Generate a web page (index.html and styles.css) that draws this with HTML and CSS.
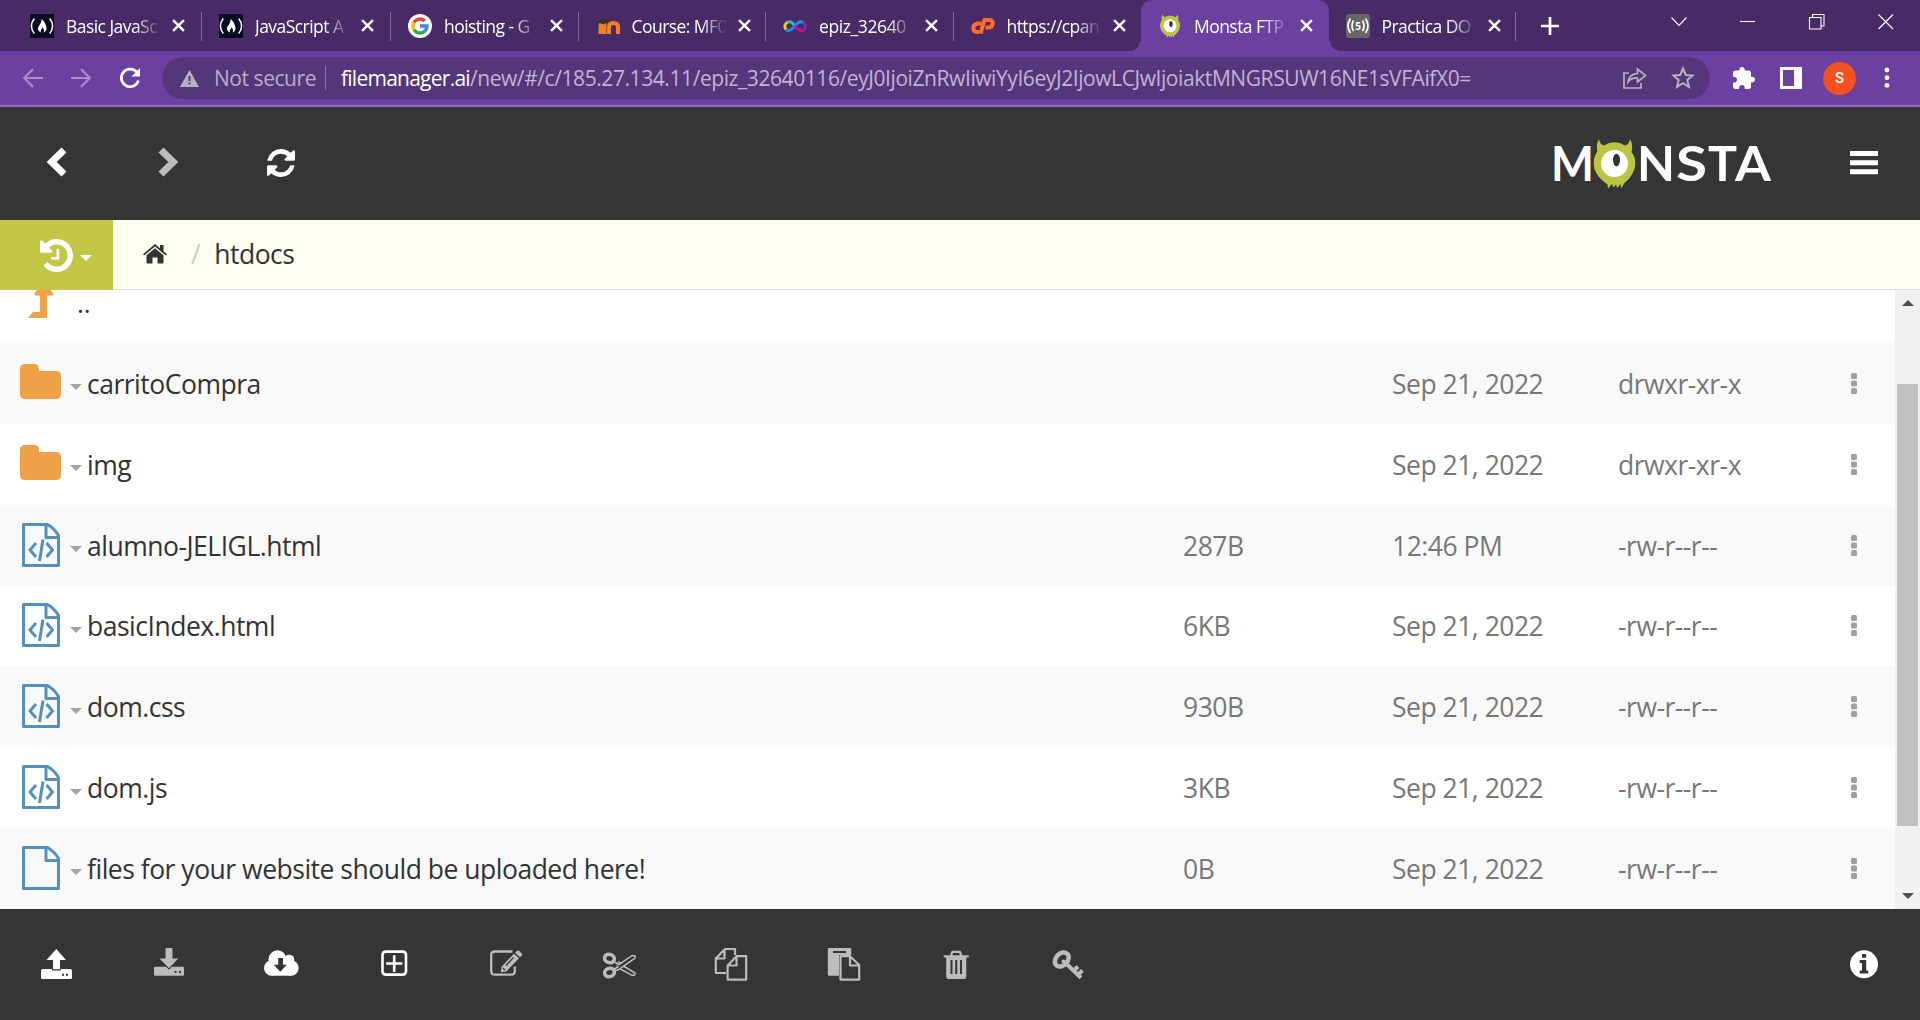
FILE: index.html
```html
<!DOCTYPE html>
<html lang="en">
<head>
<meta charset="utf-8">
<title>Monsta FTP</title>
<link rel="stylesheet" href="styles.css">
</head>
<body>
<svg class="defs" aria-hidden="true">
  <symbol id="x" viewBox="0 0 12 12"><path d="M1 1 11 11M11 1 1 11" stroke="#fff" stroke-width="2.2" fill="none"/></symbol>
  <symbol id="fcc" viewBox="0 0 24 24"><path fill="#0a0a23" d="M0 0h24v24H0z"/><path d="M4.300 4.500Q-1.500 12 4.300 19.500M19.700 4.500Q25.500 12 19.700 19.500" stroke="#fff" stroke-width="1.500" fill="none"/><path d="M11.500 5c3 2 5 6.500 5 9.500 0 2-1.200 3.500-3 4 1-1.500.8-3.500-1-5-.3 1.500-1.500 2-1.800 3.200-.1.800.2 1.400.7 1.900-2.200-.4-3.400-2-3.400-4 0-2.800 3.900-5 3.500-9.600z" fill="#fff"/></symbol>
  <symbol id="monster" viewBox="0 0 42 50"><path fill="#bcc443" d="M5.500 0C6 4 8 6 10.500 6.500Q21 0 31.500 6.500C34 6 36 4 36.500 0Q40 6 38 13Q42 18 42 25Q41 36 31 44L27.500 49.500 27 45 23.500 49 22.500 45.500 20 48.500 18.500 45 14.500 49.500 14 45.500Q1 37 0 25Q0 18 4 12Q2 6 5.500 0z"/><circle cx="21" cy="24.500" r="13.500" fill="#fff"/><ellipse cx="23" cy="21" rx="3.500" ry="6.300" fill="#333"/></symbol>
  <symbol id="folder" viewBox="0 0 41 35"><path fill="#efa148" d="M5 0h9q5 0 5 5v2h17q5 0 5 5v18q0 5-5 5H5q-5 0-5-5V5q0-5 5-5z"/></symbol>
  <symbol id="file" viewBox="0 0 38 44"><path d="M1.500 1.500H25.500Q32 5 36.500 12.500V42.500H1.500zM24 1.500V14.500H36.500" fill="none" stroke="#5390c0" stroke-width="3" stroke-linejoin="round"/></symbol>
  <symbol id="code" viewBox="0 0 38 44"><use href="#file"/><path d="M14 20 8 27 14 34M24.500 20 30.500 27 24.500 34M21 16.500 17.500 38" fill="none" stroke="#5390c0" stroke-width="3"/></symbol>
  <symbol id="caret" viewBox="0 0 12 6"><path d="M0 0H12L6 6z" fill="#a4a4a4"/></symbol>
  <symbol id="dots" viewBox="0 0 6 22"><g fill="#a0a0a0"><rect width="6" height="6" rx="1.500"/><rect y="7.600" width="6" height="6" rx="1.500"/><rect y="15" width="6" height="6" rx="1.500"/></g></symbol>
</svg>

<header class="tabs">
  <div class="tab wide"><svg class="fav"><use href="#fcc"/></svg><span>Basic JavaSc</span><svg class="close"><use href="#x"/></svg></div>
  <div class="tab wide"><svg class="fav"><use href="#fcc"/></svg><span>JavaScript A</span><svg class="close"><use href="#x"/></svg></div>
  <div class="tab"><svg class="fav" viewBox="0 0 24 24"><circle cx="12" cy="12" r="12" fill="#fff"/><g fill="none" stroke-width="3.400"><path d="M6 8.400A7 7 0 0 1 16.800 6.900" stroke="#ea4335"/><path d="M6 15.600A7 7 0 0 1 6 8.400" stroke="#fbbc05"/><path d="M16.700 17.200A7 7 0 0 1 6 15.600" stroke="#34a853"/><path d="M12 12H19A7 7 0 0 1 16.500 17.400" stroke="#4285f4"/></g></svg><span>hoisting - G</span><svg class="close"><use href="#x"/></svg></div>
  <div class="tab"><svg class="fav" viewBox="0 0 24 24"><path d="M4.500 9V20M8.500 20V8.500M13 20V13q0-4 4.500-4t4.500 4V20" stroke="#f58220" stroke-width="4" fill="none"/><path d="M0 8 9 3.500 15 6 8 10.500 3 9 1.500 15H.5z" fill="#3b3033"/></svg><span>Course: MF0</span><svg class="close"><use href="#x"/></svg></div>
  <div class="tab"><svg class="fav" viewBox="0 0 24 24"><g fill="none" stroke-width="3"><path d="M12 12Q8 6.500 4.500 8.200" stroke="#35b8c8"/><path d="M4.500 8.200Q0 11 3 15.500" stroke="#e3d70d"/><path d="M3 15.500Q6.500 18.500 12 12Q16 6 20 8.500" stroke="#1b8fe8"/><path d="M20 8.500Q24 12 21 16" stroke="#6d35ad"/><path d="M21 16Q17 18.500 12 12" stroke="#c0128f"/></g></svg><span class="snug">epiz_32640</span><svg class="close"><use href="#x"/></svg></div>
  <div class="tab"><svg class="fav" viewBox="0 0 24 24"><g fill="none" stroke="#ff6c2c" stroke-width="4"><path d="M10.500 9.500H6.500Q2.500 10.500 2.300 14Q2.500 18 6 18H8"/><path d="M9.500 19.500 13.500 6H18Q22 6 21.800 9.500Q21 13.500 17.500 13.500H14.500"/></g></svg><span>https://cpan</span><svg class="close"><use href="#x"/></svg></div>
  <div class="tab active"><svg class="fav"><use href="#monster"/></svg><span>Monsta FTP</span><svg class="close"><use href="#x"/></svg></div>
  <div class="tab last"><svg class="fav" viewBox="0 0 24 24"><rect width="24" height="24" rx="2.500" fill="#666"/><path d="M7.500 6.500Q4.500 12 7.500 17M16.500 6.500Q19.500 12 16.500 17M4.500 4.500Q-.5 12 4.500 19M19.500 4.500Q24.500 12 19.500 19" fill="none" stroke="#fff" stroke-width="1.700"/><text x="12" y="16" text-anchor="middle" class="fav5">5</text></svg><span>Practica DO</span><svg class="close"><use href="#x"/></svg></div>
  <svg class="newtab" viewBox="0 0 18 18"><path d="M9 0V18M0 9H18" stroke="#fff" stroke-width="2.700"/></svg>
  <div class="wins">
    <svg viewBox="0 0 16 16"><path d="M.5 3.500 8 11.500 15.500 3.500"/></svg>
    <svg viewBox="0 0 16 16"><path d="M0 7.500H15"/></svg>
    <svg viewBox="0 0 16 16"><path d="M.5 3.500H12V15H.5zM3.500 3.500V.5H15V12H12"/></svg>
    <svg viewBox="0 0 16 16"><path d="M.5 .5 15 15M15 .5 .5 15"/></svg>
  </div>
</header>

<div class="toolbar">
  <svg class="nav dim" viewBox="0 0 20 20"><path d="M20 10H1.500M10 1 1.200 10 10 19"/></svg>
  <svg class="nav dim" viewBox="0 0 20 20"><path d="M0 10H18.500M10 1 18.800 10 10 19"/></svg>
  <svg class="nav reload" viewBox="0 0 22 22"><path d="M17.500 4.800A8.800 8.800 0 1 0 19.500 13.500"/><path class="fill" d="M21 1V9.500H12.500z"/></svg>
  <div class="omnibox">
    <svg class="warn" viewBox="0 0 19 17"><path d="M9.500 0 19 17H0z" fill="#b8b3bf"/><path d="M9.500 6V11M9.500 12.500V14.500" stroke="#55367a" stroke-width="2"/></svg>
    <span class="insecure">Not secure</span>
    <i></i>
    <span class="url"><b>filemanager.ai</b><em>/new/#/c/185.27.134.11/epiz_32640116/eyJ0IjoiZnRwIiwiYyI6eyJ2IjowLCJwIjoiaktMNGRSUW16NE1sVFAifX0=</em></span>
    <svg class="share" viewBox="0 0 24 22"><path d="M6 6H1V21H18V16M5 15Q6 7 14.500 6.500V2L22.500 8.500 14.500 15V11Q8.500 10.500 5 15z"/></svg>
    <svg class="star" viewBox="0 0 24 24"><path d="M12 2.500 14.800 9 21.500 9.500 16.300 14 18 20.800 12 17.200 6 20.800 7.700 14 2.500 9.500 9.200 9z"/></svg>
  </div>
  <svg class="puzzle" viewBox="0 0 22 22"><path fill="#fff" d="M2.500 3.500H6.500Q6 0 9 0T11.600 3.500H15.500Q18 3.500 18 6V9.800Q22 9.500 22 12.500T18 15.300V19.500Q18 22 15.500 22H11.800Q11.800 18 9 18T6 22H2.500Q0 22 0 19.500V15.500Q4 15.500 4 12.700T0 9.700V6Q0 3.500 2.500 3.500z"/></svg>
  <svg class="panel" viewBox="0 0 22 22"><path fill="#fff" fill-rule="evenodd" d="M0 0H22V22H0zM3 3V19H14V3z"/></svg>
  <div class="avatar">S</div>
  <svg class="more" viewBox="0 0 6 22"><g fill="#fff"><circle cx="3" cy="3" r="2.400"/><circle cx="3" cy="10.700" r="2.400"/><circle cx="3" cy="18.400" r="2.400"/></g></svg>
</div>

<div class="apphead">
  <div class="cell"><svg class="chev" viewBox="0 0 20 30"><path d="M18 3 5.700 15 18 27" stroke="#fff"/></svg></div>
  <div class="cell"><svg class="chev" viewBox="0 0 20 30"><path d="M2 3 14.300 15 2 27" stroke="#bcbcbc"/></svg></div>
  <div class="cell"><svg class="refresh" viewBox="128 128 1536 1536"><path fill="#fff" d="M1639 1056q0 5-1 7-64 268-268 434.500t-478 166.500q-146 0-282.500-55t-243.500-157l-129 129q-19 19-45 19t-45-19-19-45v-448q0-26 19-45t45-19h448q26 0 45 19t19 45-19 45l-137 137q71 66 161 102t187 36q134 0 250-65t186-179q11-17 53-117 8-23 30-23h192q13 0 22.500 9.500t9.500 22.500zm25-800v448q0 26-19 45t-45 19h-448q-26 0-45-19t-19-45 19-45l138-138q-148-137-349-137-134 0-250 65t-186 179q-11 17-53 117-8 23-30 23h-199q-13 0-22.500-9.500t-9.500-22.500v-7q65-268 270-434.500t480-166.500q146 0 284 55.500t245 156.500l130-129q19-19 45-19t45 19 19 45z"/></svg></div>
  <svg class="logo" viewBox="0 0 220 52" role="img" aria-label="Monsta">
    <g class="logotext"><text x="-3" y="43" textLength="43" lengthAdjust="spacingAndGlyphs">M</text><text x="83" y="43" textLength="38" lengthAdjust="spacingAndGlyphs">N</text><text x="122" y="43" textLength="31" lengthAdjust="spacingAndGlyphs">S</text><text x="154" y="43" textLength="29" lengthAdjust="spacingAndGlyphs">T</text><text x="181" y="43" textLength="36" lengthAdjust="spacingAndGlyphs">A</text></g>
    <use href="#monster" x="39.500" y="1" width="42" height="50"/>
  </svg>
  <div class="cell"><svg class="burger" viewBox="0 0 28 24"><path d="M0 2.500H28M0 11.700H28M0 20.700H28" stroke="#fff" stroke-width="5"/></svg></div>
</div>

<div class="crumbs">
  <div class="history"><svg class="clock" viewBox="128 128 1536 1536"><path fill="#fff" d="M1664 896q0 156-61 298t-164 245-245 164-298 61q-172 0-327-72.500t-264-204.500q-7-10-6.500-22.500t8.500-20.500l137-138q10-9 25-9 16 2 23 12 73 95 179 147t225 52q104 0 198.500-40.500t163.500-109.500 109.500-163.500 40.500-198.500-40.500-198.500-109.500-163.500-163.500-109.500-198.500-40.500q-98 0-188 35.500t-160 101.500l137 138q31 30 14 69-17 40-59 40h-448q-26 0-45-19t-19-45v-448q0-42 40-59 39-17 69 14l130 129q107-101 244.500-156.500t284.500-55.500q156 0 298 61t245 164 164 245 61 298zm-640-288v448q0 14-9 23t-23 9h-320q-14 0-23-9t-9-23v-64q0-14 9-23t23-9h224v-352q0-14 9-23t23-9h64q14 0 23 9t9 23z"/></svg><svg class="hcaret" viewBox="0 0 12 6"><path fill="#fff" d="M0 0H12L6 6z"/></svg></div>
  <svg class="home" viewBox="0 0 24 20"><path fill="#333" d="M12 4.200 20.500 11.300V18.500Q20.500 19.500 19.500 19.500H14.500V13.500H9.500V19.500H4.500Q3.500 19.500 3.500 18.500V11.300zM12 0 17 4.200V1H20.500V7.200L24 10.200 22.800 11.500 12 2.600 1.200 11.500 0 10.200z"/></svg>
  <span class="slash">/</span><span class="here">htdocs</span>
</div>

<main class="list">
  <div class="rows">
    <div class="up"><svg viewBox="0 0 26 28"><path fill="#efa148" d="M9 0H22L25.500 3.500Q25.500 5.500 24 5.500H19V28H0L4.500 22.500 6 22H12V5.500H7.500Q6 5.500 6.500 3.500z"/></svg><span>..</span></div>
    <div class="row"><svg class="ic fold"><use href="#folder"/></svg><svg class="car"><use href="#caret"/></svg><span class="name">carritoCompra</span><span class="size"></span><span class="date">Sep 21, 2022</span><span class="perm">drwxr-xr-x</span><svg class="dots"><use href="#dots"/></svg></div>
    <div class="row"><svg class="ic fold"><use href="#folder"/></svg><svg class="car"><use href="#caret"/></svg><span class="name">img</span><span class="size"></span><span class="date">Sep 21, 2022</span><span class="perm">drwxr-xr-x</span><svg class="dots"><use href="#dots"/></svg></div>
    <div class="row"><svg class="ic"><use href="#code"/></svg><svg class="car"><use href="#caret"/></svg><span class="name">alumno-JELIGL.html</span><span class="size">287B</span><span class="date">12:46 PM</span><span class="perm">-rw-r--r--</span><svg class="dots"><use href="#dots"/></svg></div>
    <div class="row"><svg class="ic"><use href="#code"/></svg><svg class="car"><use href="#caret"/></svg><span class="name">basicIndex.html</span><span class="size">6KB</span><span class="date">Sep 21, 2022</span><span class="perm">-rw-r--r--</span><svg class="dots"><use href="#dots"/></svg></div>
    <div class="row"><svg class="ic"><use href="#code"/></svg><svg class="car"><use href="#caret"/></svg><span class="name">dom.css</span><span class="size">930B</span><span class="date">Sep 21, 2022</span><span class="perm">-rw-r--r--</span><svg class="dots"><use href="#dots"/></svg></div>
    <div class="row"><svg class="ic"><use href="#code"/></svg><svg class="car"><use href="#caret"/></svg><span class="name">dom.js</span><span class="size">3KB</span><span class="date">Sep 21, 2022</span><span class="perm">-rw-r--r--</span><svg class="dots"><use href="#dots"/></svg></div>
    <div class="row"><svg class="ic"><use href="#file"/></svg><svg class="car"><use href="#caret"/></svg><span class="name">files for your website should be uploaded here!</span><span class="size">0B</span><span class="date">Sep 21, 2022</span><span class="perm">-rw-r--r--</span><svg class="dots"><use href="#dots"/></svg></div>
  </div>
  <div class="scroll">
    <svg viewBox="0 0 12 6"><path d="M0 6H12L6 0z" fill="#505050"/></svg>
    <div class="thumb"></div>
    <svg viewBox="0 0 12 6"><path d="M0 0H12L6 6z" fill="#505050"/></svg>
  </div>
</main>

<footer class="actions">
  <div class="cell"><svg viewBox="0 0 40 40"><rect x="5" y="25" width="31" height="10" rx="1.500" fill="#fff"/><path d="M16 24H25V26.500H16z" fill="#353535"/><path fill="#fff" d="M20.300 5 30 16H24V25.300H17V16H10.500z"/><path d="M26 29.800h2v2h-2zM30 29.800h2v2h-2z" fill="#353535"/></svg></div>
  <div class="cell"><svg viewBox="0 0 40 40"><rect x="5" y="22.700" width="30" height="9" rx="1" fill="#bcbcbc"/><path fill="#bcbcbc" stroke="#353535" stroke-width="2" paint-order="stroke" d="M16.500 5Q16.500 4 17.500 4H22.500Q23.500 4 23.500 5V14.500H29.300L20 24.300 10.500 14.500H16.500z"/><path d="M25.500 27h2v2h-2zM30 27h2v2h-2z" fill="#353535"/></svg></div>
  <div class="cell"><svg viewBox="0 0 40 40"><g fill="#fff"><circle cx="10.700" cy="24" r="7.700"/><circle cx="16.500" cy="15.300" r="9"/><circle cx="28.300" cy="15.700" r="5"/><circle cx="30" cy="24" r="7.700"/><path d="M10.700 16H30V31.700H10.700z"/></g><path d="M17.200 14H22V20.700H25.800L19.300 27.700 12.700 20.700H17.200z" fill="#353535"/></svg></div>
  <div class="cell"><svg viewBox="0 0 40 40"><path d="M12 7.600H28.500Q32 7.600 32 11V27.200Q32 30.600 28.500 30.600H12Q8.500 30.600 8.500 27.200V11Q8.500 7.600 12 7.600zM20.200 11.300V28M12.200 19.500H28.300" fill="none" stroke="#fff" stroke-width="2.600"/></svg></div>
  <div class="cell"><svg viewBox="0 0 40 40"><path d="M26.500 7.500H9Q5.200 7.500 5.200 11V27Q5.200 30.700 9 30.700H25Q28.800 30.700 28.800 27V22.500" fill="none" stroke="#bcbcbc" stroke-width="2.300"/><path fill="#bcbcbc" d="M28 9.700 33 14.300 20.300 27.500 14.800 28.300 15.500 22.700zM29 8.700 31 6.800Q32 6 33 6.800L35.800 9.500Q36.600 10.500 35.800 11.500L34 13.300z"/><path d="M20 21.500 27.500 13.500M16.800 24 19 26.200" stroke="#353535" stroke-width="1.200"/></svg></div>
  <div class="cell"><svg viewBox="0 0 40 40"><g fill="none" stroke="#bcbcbc"><g stroke-width="3.600"><ellipse cx="10.500" cy="14.500" rx="5" ry="4.100" transform="rotate(20 10.500 14.500)"/><ellipse cx="10.500" cy="28.500" rx="5" ry="4.100" transform="rotate(-20 10.500 28.500)"/></g><path d="M15.500 18 20 20.500 33 11.500 36 12 36 14 19 26 15 26.500M15.500 25 19.500 22.500M19 18 23 19.500M24.500 22 36 29 35.500 31 33 31.300 20.500 24.500M17.500 21.500H18.500" stroke-width="1.500"/></g></svg></div>
  <div class="cell"><svg viewBox="0 0 40 40"><path d="M15 29H4.800V14.500L14 5H24V11M13.500 5V14.500H5M16.600 21.500 25.500 12.200H35.200V35.600H16.600zM25.500 12.200V21.500H16.600" fill="none" stroke="#bcbcbc" stroke-width="2.200" stroke-linejoin="round"/></svg></div>
  <div class="cell"><svg viewBox="0 0 40 40"><path d="M5 4H26Q27.300 4 27.300 5.200V11H15V31.700H5Q3.800 31.700 3.800 30.500V5.200Q3.800 4 5 4z" fill="#bcbcbc"/><path d="M9 8H22" stroke="#353535" stroke-width="2"/><path d="M16.500 12.200H26L35.200 21V35.600H16.500zM26 12.200V21.500H35" fill="#353535" stroke="#bcbcbc" stroke-width="2.200" stroke-linejoin="round"/></svg></div>
  <div class="cell"><svg viewBox="0 0 40 40"><path d="M7.700 11.200H32.700V13.600H30.300V32.500Q30.300 35 27.800 35H12.700Q10.200 35 10.200 32.500V13.600H7.700z" fill="#bcbcbc"/><path d="M15 12 16.300 7.800H24L25.300 12" fill="none" stroke="#bcbcbc" stroke-width="2.200" stroke-linejoin="round"/><path d="M15.500 16V30M20.200 16V30M25 16V30" stroke="#353535" stroke-width="2"/></svg></div>
  <div class="cell"><svg viewBox="0 0 40 40"><g fill="none" stroke="#bcbcbc" stroke-width="4.500"><ellipse cx="12.800" cy="15.500" rx="8" ry="5.800" transform="rotate(-48 12.800 15.500)"/><path d="M15.500 18 32 33.800M25.500 26 29 22.500M29.500 30 33.500 26.500" stroke-linecap="butt" stroke-width="4"/></g><circle cx="14.500" cy="17.500" r="2" fill="#bcbcbc"/></svg></div>
  <div class="cell info"><svg viewBox="0 0 40 40"><circle cx="20" cy="20.300" r="14" fill="#fff"/><path d="M18 10H22.200V13.700H18zM15.700 16H22.200V26.500H24.200V29.500H15.700V26.500H18V19H15.700z" fill="#353535"/></svg></div>
</footer>
</body>
</html>
```

FILE: styles.css
```css
* { box-sizing: border-box; }
body {
  margin: 0;
  width: 1920px;
  height: 1020px;
  display: flex;
  flex-direction: column;
  overflow: hidden;
  background: #fff;
  font-family: "Open Sans", "Noto Sans", sans-serif;
}
svg { display: block; flex: none; overflow: visible; }
.defs { width: 0; height: 0; position: absolute; }

.tabs {
  height: 51px;
  flex: none;
  display: flex;
  align-items: center;
  padding-left: 13px;
  background: #472a66;
}
.tab {
  width: 187.500px;
  height: 51px;
  flex: none;
  padding: 0 17px 0 17px;
  display: flex;
  align-items: center;
  color: #fff;
  font-size: 17.500px;
  position: relative;
}
.tab.wide { width: 189px; }
.tab::after {
  content: "";
  position: absolute;
  right: 0;
  top: 12px;
  width: 1px;
  height: 29px;
  background: #82709a;
}
.tab:nth-child(6)::after, .tab.active::after { display: none; }
.tab .fav { width: 24px; height: 24px; margin-top: 1px; }
.tab span {
  width: 95px;
  flex: none;
  margin-left: 12px;
  white-space: nowrap;
  letter-spacing: -0.550px;
  -webkit-mask-image: linear-gradient(90deg, #000 72%, transparent);
  mask-image: linear-gradient(90deg, #000 72%, transparent);
}
.tab span.snug { letter-spacing: -0.400px; }
.tab .close { width: 13px; height: 13px; margin-left: 11px; }
.tab.active { z-index: 1; }
.tab.active::before {
  content: "";
  position: absolute;
  z-index: -1;
  inset: 0 -11px 0 -11px;
  background:
    radial-gradient(circle at 0 0, transparent 9.500px, #6c40a0 10px) 0 100% / 11px 10px no-repeat,
    radial-gradient(circle at 100% 0, transparent 9.500px, #6c40a0 10px) 100% 100% / 11px 10px no-repeat;
}
.tab.active { background: #6c40a0; border-radius: 11px 11px 0 0; }
.fav5 { font: 700 10px "Open Sans", sans-serif; fill: #fff; }
.newtab { width: 18px; height: 18px; margin-left: 25px; }
.wins { display: flex; margin-left: auto; padding-bottom: 8px; }
.wins svg { width: 16px; height: 16px; margin: 0 26.500px; fill: none; stroke: #fff; stroke-width: 1.100; }

.toolbar {
  height: 56px;
  flex: none;
  display: flex;
  align-items: center;
  padding: 0 30px 0 23px;
  background: #6c40a0;
  border-bottom: 2px solid #8d69b8;
}
.nav { width: 20px; height: 20px; margin-right: 28px; fill: none; stroke: #fff; stroke-width: 2.200; }
.nav.dim { stroke: #a98cc9; }
.nav.reload { width: 22px; height: 22px; margin-right: 21px; stroke-width: 2.700; }
.nav .fill { fill: #fff; stroke: none; }
.omnibox {
  width: 1548px;
  height: 42px;
  flex: none;
  border-radius: 21px;
  background: #55367a;
  display: flex;
  align-items: center;
  padding: 0 15px 0 18px;
  font-size: 21px;
  white-space: nowrap;
}
.warn { width: 19px; height: 17px; }
.insecure { width: 101px; margin-left: 15px; color: #b9adc6; letter-spacing: -0.450px; }
.omnibox i { width: 1px; height: 24px; margin: 0 15px 0 10px; background: #9079ab; }
.url b { font-weight: 400; color: #fff; letter-spacing: -0.750px; }
.url em { font-style: normal; color: #c3b2d6; letter-spacing: -0.420px; }
.share { width: 24px; height: 22px; margin-left: auto; margin-right: 24px; fill: none; stroke: #b8b3bf; stroke-width: 1.700; }
.star { width: 24px; height: 24px; fill: none; stroke: #b8b3bf; stroke-width: 2; }
.puzzle { width: 22px; height: 22px; margin-left: 23px; }
.panel { width: 22px; height: 22px; margin-left: 25px; }
.avatar {
  width: 33px;
  height: 33px;
  margin-left: 21px;
  border-radius: 50%;
  background: #f4511e;
  color: #fff;
  font: 500 15px/33px Roboto, sans-serif;
  text-align: center;
}
.more { width: 6px; height: 22px; margin-left: 28px; }

.apphead {
  height: 113px;
  flex: none;
  display: flex;
  align-items: center;
  background: #353535;
}
.cell { width: 112.500px; display: flex; justify-content: center; flex: none; }
.chev { width: 20px; height: 30px; margin-top: -3px; fill: none; stroke-width: 7; }
.refresh { width: 28px; height: 28px; margin-top: -2px; }
.logo { width: 220px; height: 52px; margin-left: auto; margin-right: 34px; margin-top: 1px; }
.logotext { font: 700 48px Lato, sans-serif; fill: #fff; }
.burger { width: 28px; height: 24px; margin-top: -1px; }

.crumbs {
  height: 70px;
  flex: none;
  display: flex;
  align-items: center;
  background: #fffff2;
  border-bottom: 1px solid #ddd;
  padding-bottom: 1px;
  font-size: 26.500px;
  letter-spacing: -0.500px;
  color: #333;
}
.history {
  width: 113px;
  height: 70px;
  margin-bottom: -2px;
  display: flex;
  align-items: center;
  padding: 0 0 0 39.500px;
  background: #c3c745;
}
.clock { width: 33px; height: 33px; }
.hcaret { width: 12px; height: 6px; margin: 6px 0 0 7px; }
.home { width: 24px; height: 20px; margin-left: 30px; }
.slash { margin-left: 24px; color: #ccc; }
.here { margin-left: 14px; }
.slash, .here { margin-top: -1px; }

.list { height: 619px; flex: none; display: flex; }
.rows { width: 1895px; }
.up { height: 53px; padding-left: 28px; display: flex; font-size: 26px; color: #333; }
.up svg { width: 26px; height: 28px; }
.up span { margin-left: 23px; line-height: 26px; }
.row {
  height: 80.857px;
  padding: 1px 0 0 20px;
  display: flex;
  align-items: center;
  font-size: 26.500px;
  letter-spacing: -0.490px;
  color: #777;
  white-space: nowrap;
}
.row:nth-child(even) { background: #f9f9f9; }
.ic { width: 38px; height: 44px; margin: 0 2px 2px 1.500px; }
.ic.fold { width: 41px; height: 35px; margin: 0 .5px 5px 0; }
.car { width: 12px; height: 6px; margin: 7px 5px 0 8.500px; }
.name { width: 1096px; color: #333; }
.size { width: 209px; }
.date { width: 226px; }
.perm { width: 233px; }
.dots { width: 6px; height: 22px; }
.scroll {
  width: 25px;
  display: flex;
  flex-direction: column;
  align-items: center;
  padding: 10px 0;
  background: #f1f1f1;
}
.scroll svg { width: 12px; height: 6px; }
.scroll .thumb { width: 21px; height: 442px; margin: 78px 0 67px; background: #c1c1c1; }

.actions { flex: 1; display: flex; align-items: center; background: #353535; padding-bottom: 1px; }
.actions svg { width: 40px; height: 40px; }
.info { margin-left: auto; }
```
